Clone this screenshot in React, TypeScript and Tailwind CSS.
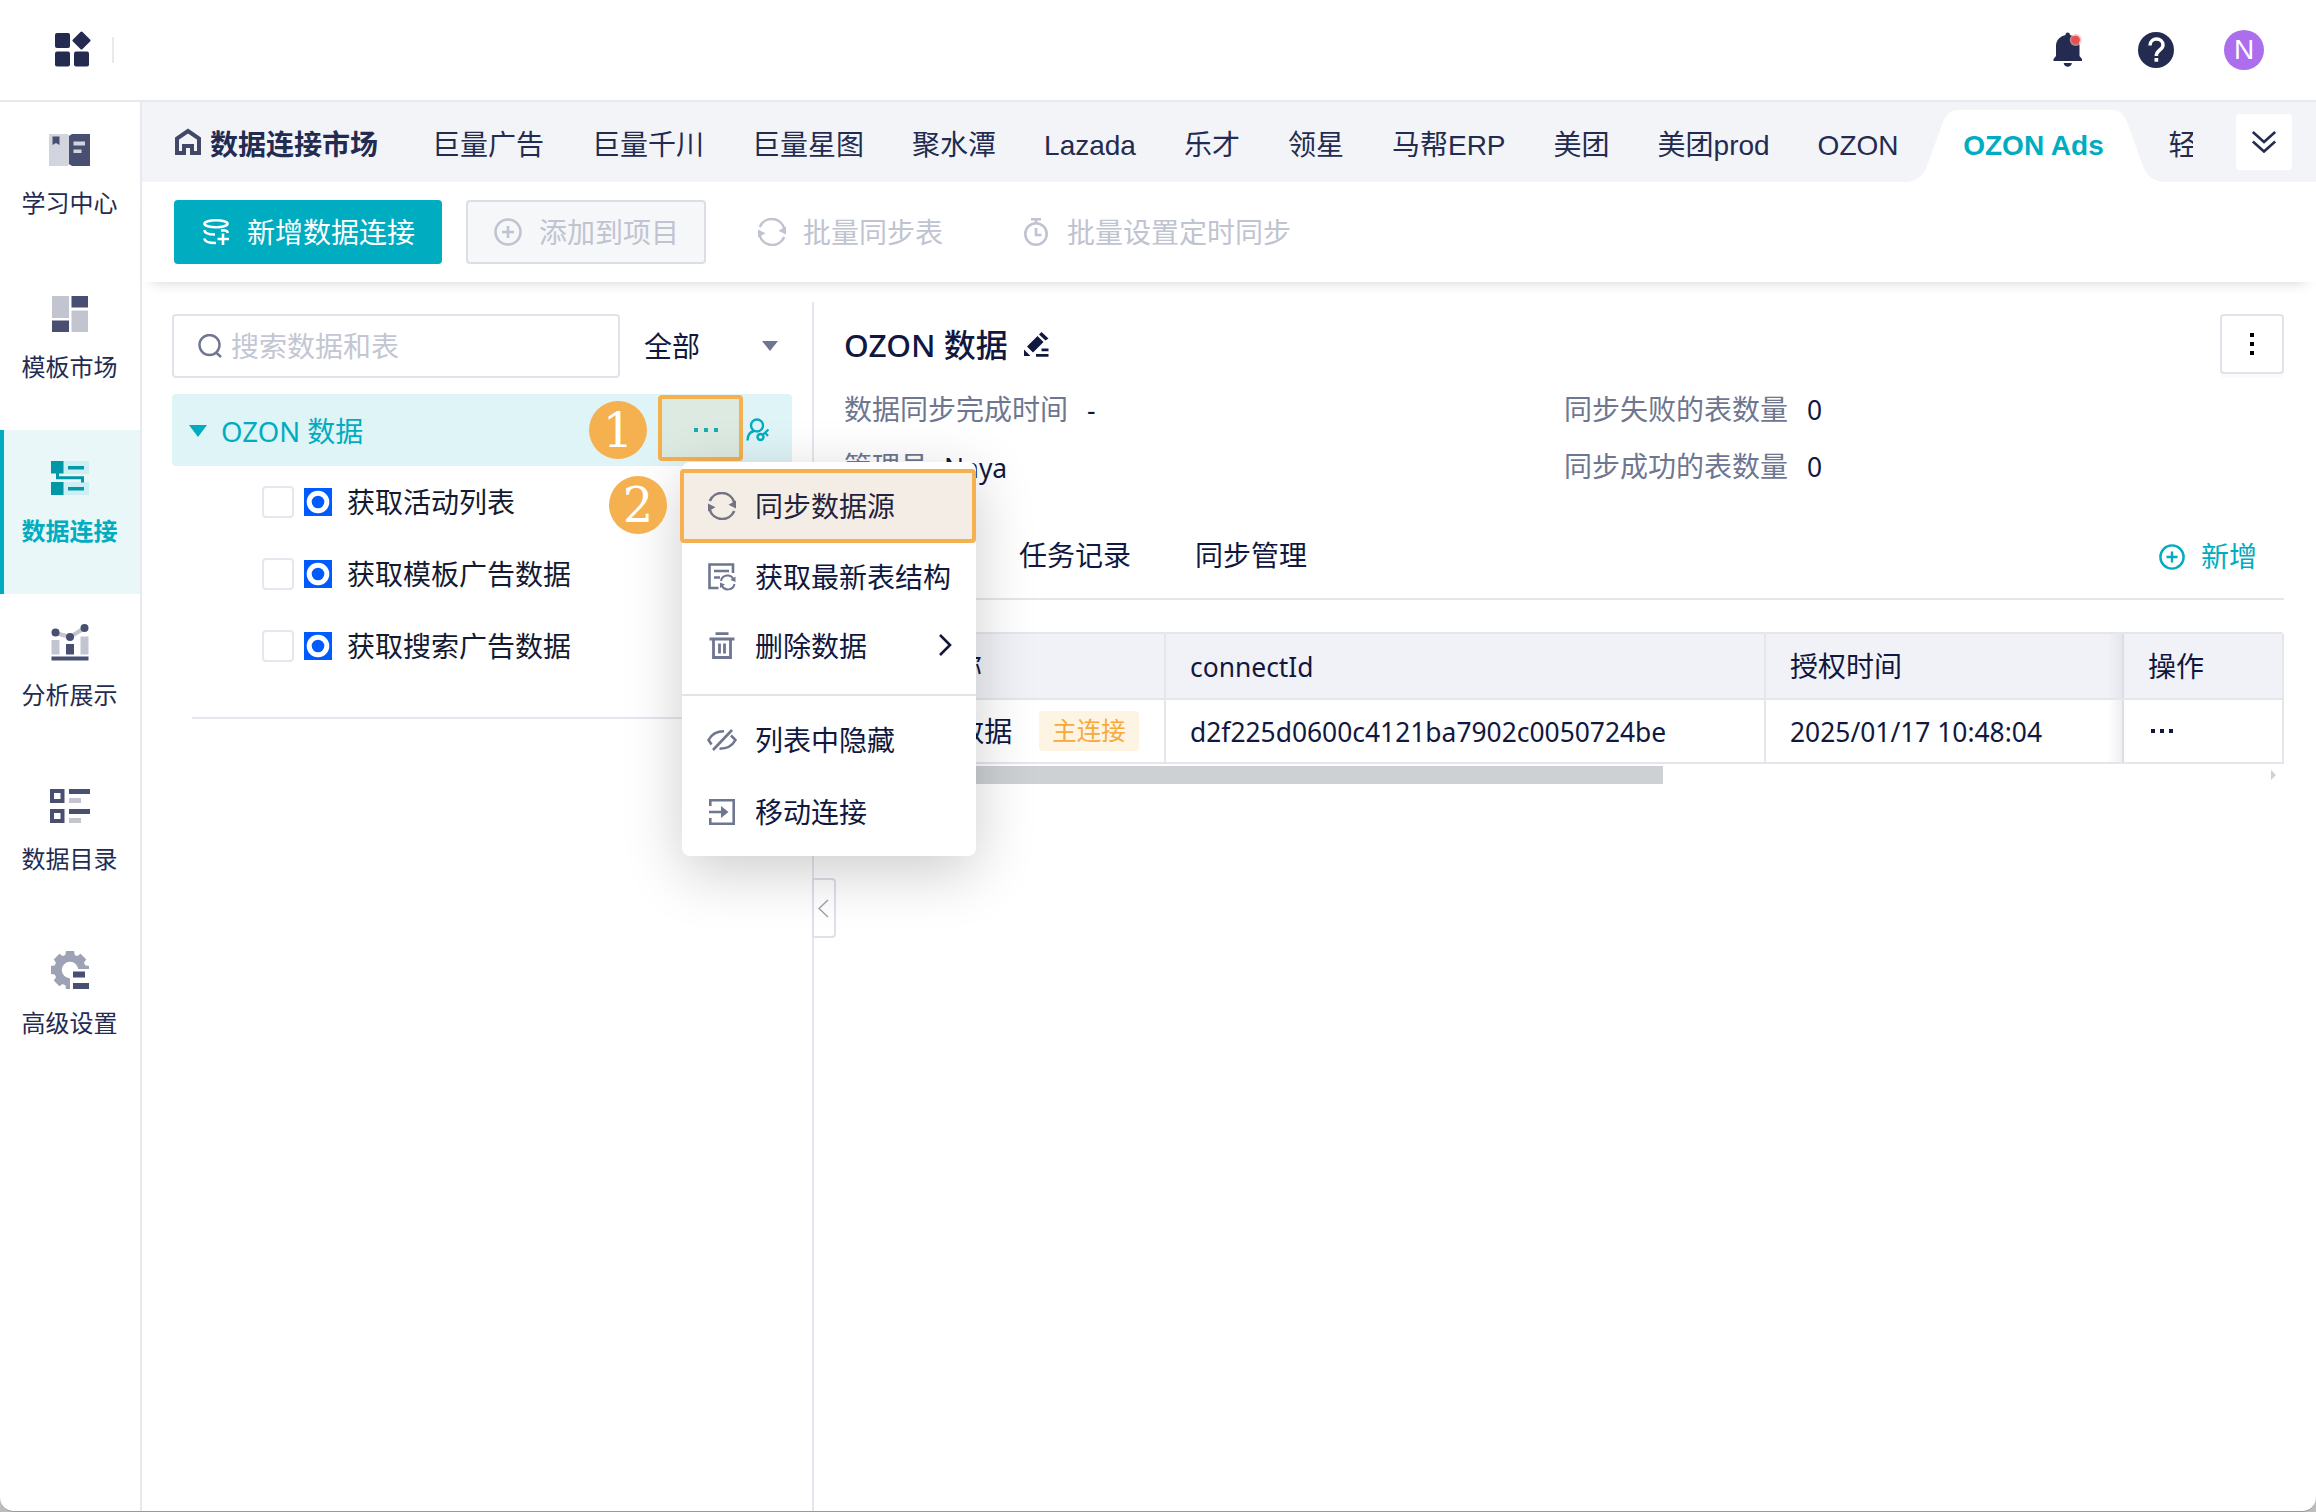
import type { ReactNode } from 'react';

const TABS = ['巨量广告', '巨量千川', '巨量星图', '聚水潭', 'Lazada', '乐才', '领星', '马帮ERP', '美团', '美团prod', 'OZON'];
const TABLES = ['获取活动列表', '获取模板广告数据', '获取搜索广告数据'];

// Latin text in the content area is set in a humanist face, slightly smaller than the CJK text
function Latin({ children, className = 'text-[26.4px]' }: { children: ReactNode; className?: string }) {
  return <span className={`font-['Noto_Sans','Noto_Sans_CJK_SC',sans-serif] ${className}`}>{children}</span>;
}

function BookIcon() {
  return (
    <svg width="42" height="32" viewBox="0 0 42 32">
      <path d="M0 0H18L21 2V30L18 32H0Z" fill="#d2d5de" />
      <path d="M20 2L23 0H41V32H23L20 30Z" fill="#484f70" />
      <path d="M3.5 2.5H10.5V11L7 9L3.5 11Z" fill="#484f70" />
      <path d="M24.5 7.5H36V11.5H24.5ZM24.5 15.5H32.5V19H24.5Z" fill="#d2d5de" />
    </svg>
  );
}

function TemplateIcon() {
  return (
    <svg width="36" height="36" viewBox="0 0 36 36">
      <path d="M0 0H17V22H0ZM19.5 14.5H36V36H19.5Z" fill="#c2c5d0" />
      <path d="M19.5 0H36V11.5H19.5ZM0 24.5H17V36H0Z" fill="#484f70" />
    </svg>
  );
}

function ConnectIcon() {
  return (
    <svg width="38" height="34" viewBox="0 0 38 34">
      <path d="M12 0H38V13H12ZM12 21H38V34H12Z" fill="#cdeef3" />
      <path d="M0 0H12.5V12.5H0ZM0 21H12.5V34H0Z" fill="#0097a7" />
      <path d="M17 5H33V8.5H17ZM17 26H33V29.5H17Z" fill="#0097a7" />
      <path d="M6.5 12V16.7H31.5V21.5" fill="none" stroke="#0097a7" strokeWidth="3" />
    </svg>
  );
}

function AnalysisIcon() {
  return (
    <svg width="38" height="38" viewBox="0 0 38 38">
      <path d="M4.5 10L19 14L33.5 5" fill="none" stroke="#c2c5d0" strokeWidth="4" />
      <path d="M0.5 17H8.5V31.5H0.5ZM29.5 13.5H37.5V31.5H29.5Z" fill="#c2c5d0" />
      <path d="M15 21H23V31.5H15ZM0.5 33.5H37.5V37.5H0.5Z" fill="#484f70" />
      <circle cx="4.5" cy="9.5" r="4" fill="#484f70" />
      <circle cx="19" cy="14" r="4" fill="#484f70" />
      <circle cx="33.5" cy="5" r="4" fill="#484f70" />
    </svg>
  );
}

function CatalogIcon() {
  return (
    <svg width="40" height="34" viewBox="0 0 40 34">
      <path d="M2 2H12.5V12H2ZM2 22H12.5V32H2Z" fill="none" stroke="#484f70" strokeWidth="4" />
      <path d="M19 0H40V5H19ZM19 20H40V25H19Z" fill="#484f70" />
      <path d="M19 9H31V14H19ZM19 29H31V34H19Z" fill="#c2c5d0" />
    </svg>
  );
}

function SettingIcon() {
  return (
    <svg width="38" height="38" viewBox="0 0 38 38">
      <g fill="#9ea2b5">
        <circle cx="19" cy="19" r="12" fill="none" stroke="#9ea2b5" strokeWidth="7.5" />
        {[90, 135, 180, 225, 270, 315, 0, 45].map((deg) => (
          <path key={deg} d="M15 0H23L24 6H14Z" transform={`rotate(${deg} 19 19)`} />
        ))}
      </g>
      <path d="M19 18H38V38H19Z" fill="#fff" />
      <path d="M22 20.5H34V26.5H22ZM22 32H38V38H22Z" fill="#484f70" />
    </svg>
  );
}

const MENU = [
  { label: '学习中心', icon: <BookIcon /> },
  { label: '模板市场', icon: <TemplateIcon /> },
  { label: '数据连接', icon: <ConnectIcon />, active: true },
  { label: '分析展示', icon: <AnalysisIcon /> },
  { label: '数据目录', icon: <CatalogIcon /> },
  { label: '高级设置', icon: <SettingIcon /> },
];

function SyncIcon({ size = 28 }: { size?: number }) {
  return (
    <svg width={size} height={size} viewBox="0 0 28 28" fill="none" stroke="currentColor" strokeWidth="2.6">
      <path d="M1.8 9A13 13 0 0 1 26.3 10.5" />
      <path d="M26.2 19A13 13 0 0 1 1.7 17.5" />
      <path d="M28 8.5V16.5L20.5 12.8Z M0 19.5V11.5L7.5 15.2Z" fill="currentColor" stroke="none" />
    </svg>
  );
}

function PlusCircle({ size = 28 }: { size?: number }) {
  return (
    <svg width={size} height={size} viewBox="0 0 28 28" fill="none" stroke="currentColor" strokeWidth="2.6">
      <circle cx="14" cy="14" r="12.5" />
      <path d="M14 8V20M8 14H20" />
    </svg>
  );
}

function Header() {
  return (
    <header className="flex h-[102px] shrink-0 items-center border-b-2 border-[#e8e9ee] pr-[52px] pl-[54px]">
      <svg width="38" height="38" viewBox="0 0 38 38" fill="#242b50">
        <rect x="1" y="2" width="15" height="15" rx="2" />
        <rect x="1" y="20.5" width="15" height="15" rx="2" />
        <rect x="20" y="20.5" width="15" height="15" rx="2" />
        <rect x="20.7" y="2.7" width="13.6" height="13.6" rx="1.5" transform="rotate(45 27.5 9.5)" />
      </svg>
      <div className="ml-5 h-[26px] w-0.5 bg-[#e8e9ee]" />
      <div className="flex-1" />
      <svg width="30" height="36" viewBox="0 0 30 36" className="mr-[55px]">
        <path d="M12.5 3C12.5 -0.3 17 -0.3 17 3C23 4.5 26.5 8.5 26.5 14V24L29 27V29H0.5V27L3 24V14C3 8.5 6.5 4.5 12.5 3Z" fill="#242b50" />
        <path d="M10.7 31H18.8C18.4 36 11.1 36 10.7 31Z" fill="#242b50" />
        <circle cx="22.7" cy="8" r="6" fill="#f6a9a9" fillOpacity="0.7" />
        <circle cx="22.7" cy="8" r="4.2" fill="#e8504f" />
      </svg>
      <svg width="36" height="36" viewBox="0 0 36 36" className="mr-[50px]">
        <circle cx="18" cy="18" r="18" fill="#242b50" />
        <path d="M12 13.5C12 5 25 5 25 13C25 18 18.3 18 18.3 24" fill="none" stroke="#fff" strokeWidth="3.5" />
        <path d="M16.5 26H20.2V29.7H16.5Z" fill="#fff" />
      </svg>
      <div className="flex size-10 items-center justify-center rounded-full bg-[#ad6eee] text-[28px] leading-none text-white">N</div>
    </header>
  );
}

function Sidebar() {
  return (
    <nav className="w-[142px] shrink-0 border-r-2 border-[#e8e9ee]">
      {MENU.map((item) => (
        <div
          key={item.label}
          className={
            item.active
              ? 'flex h-[164px] flex-col items-center border-l-4 border-[#00acc0] bg-[#e9f7f8] pr-1 font-bold text-[#00acc0]'
              : 'flex h-[164px] flex-col items-center text-[#242b50]'
          }
        >
          <div className="mt-7 flex h-10 items-center">{item.icon}</div>
          <div className="mt-4 mr-px text-[24px] leading-9">{item.label}</div>
        </div>
      ))}
    </nav>
  );
}

function TabBar() {
  return (
    <div className="flex h-20 shrink-0 items-center bg-[#f2f4f8] pl-[32px] text-[28px] leading-10 whitespace-nowrap text-[#242b50]">
      <svg width="28" height="28" viewBox="0 0 28 28" fill="none" stroke="#424968" strokeWidth="4">
        <path d="M3 25V10.5L14 3L25 10.5V25H18V18H10V25Z" />
      </svg>
      <div className="ml-2 w-[222px] pt-2 font-bold">数据连接市场</div>
      <div className="flex gap-12 pt-2">
        {TABS.map((tab) => (
          <div key={tab}>{tab}</div>
        ))}
      </div>
      <div className="relative ml-2 flex h-[72px] w-[256px] translate-y-1 items-center justify-center">
        <svg className="absolute inset-0" width="256" height="72" viewBox="0 0 256 72">
          <path d="M0 72C10 71 17 65 20 56L36 12C39 4 44 0 52 0H204C212 0 217 4 220 12L236 56C239 65 246 71 256 72Z" fill="#fff" />
        </svg>
        <span className="relative pr-0.5 font-bold text-[#00acc0]">OZON Ads</span>
      </div>
      <div className="ml-[6px] w-6 overflow-hidden pt-2">轻</div>
      <div className="mr-6 ml-auto flex size-14 items-center justify-center rounded bg-white">
        <svg width="24" height="22" viewBox="0 0 24 22" fill="none" stroke="#242b50" strokeWidth="2.6">
          <path d="M0.8 1L12 11L23.2 1M0.8 10.5L12 20.5L23.2 10.5" />
        </svg>
      </div>
    </div>
  );
}

function Toolbar() {
  return (
    <div className="flex h-[100px] shrink-0 items-center pl-8 text-[28px] leading-10 text-[#c0c3d0] shadow-[0_10px_12px_-10px_rgba(0,0,0,0.18)]">
      <button className="flex h-16 w-[268px] items-center rounded bg-[#00acc0] pl-[29px] text-white">
        <svg width="26" height="26" viewBox="0 0 26 26" fill="none" stroke="currentColor" strokeWidth="2.6">
          <ellipse cx="13" cy="4.8" rx="11.5" ry="3.5" />
          <path d="M1.5 11C1.5 14 6 15.5 12 15.5M1.5 19.5C1.5 22.5 6 24 13 24M18 11.5C22 11 24.5 11.5 24.8 14M20 14.5V26M14.5 20H26" />
        </svg>
        <span className="ml-[18px] pt-1">新增数据连接</span>
      </button>
      <button className="ml-6 flex h-16 w-[240px] items-center rounded border-2 border-[#dcdee6] bg-[#f6f7f9] pl-[26px]">
        <PlusCircle />
        <span className="ml-[17px] pt-1">添加到项目</span>
      </button>
      <div className="ml-[52px] flex items-center">
        <SyncIcon />
        <span className="ml-[17px] pt-1">批量同步表</span>
      </div>
      <div className="ml-[79px] flex items-center">
        <svg width="28" height="28" viewBox="0 0 28 28" fill="none" stroke="currentColor" strokeWidth="2.6">
          <circle cx="14" cy="16" r="10.7" />
          <path d="M9 1.3H19M14 1V5M14 10V17H19.5" />
        </svg>
        <span className="ml-[17px] pt-1">批量设置定时同步</span>
      </div>
    </div>
  );
}

function MenuRow({ icon, label, className = 'h-[72px]', arrow }: { icon: ReactNode; label: string; className?: string; arrow?: boolean }) {
  return (
    <div className={`flex items-center pr-6 pl-6 whitespace-nowrap ${className}`}>
      <div className="flex w-8 justify-center pb-0.5 text-[#6e7690]">{icon}</div>
      <span className="ml-[17px] flex-1 pt-0.5">{label}</span>
      {arrow && (
        <svg width="13" height="22" viewBox="0 0 13 22" fill="none" stroke="#111840" strokeWidth="2.6" className="mb-1">
          <path d="M1 1L11 11L1 21" />
        </svg>
      )}
    </div>
  );
}

function ContextMenu() {
  return (
    <div className="absolute top-[68px] left-[510px] z-10 h-[394px] w-[294px] rounded-lg bg-white pt-2 text-[#111840] shadow-[0_16px_60px_rgba(0,0,0,0.2)]">
      <MenuRow icon={<SyncIcon />} label="同步数据源" className="h-[72px] pt-0.5" />
      <MenuRow
        label="获取最新表结构"
        icon={
          <svg width="28" height="28" viewBox="0 0 28 28" fill="none" stroke="currentColor" strokeWidth="2.6">
            <path d="M10.5 25H1.5V1.5H25V10M6 8H21M6 14.5H12" />
            <path d="M13 18C14 11.5 23 10.5 25.5 16.5M26.5 21C25 28 16 28 13.5 22" strokeWidth="2" />
            <path d="M27.5 13.5V19L22.5 17ZM12 25V19.5L17 21.5Z" fill="currentColor" stroke="none" />
          </svg>
        }
      />
      <MenuRow
        label="删除数据"
        arrow
        className="h-[68px] pb-0.5"
        icon={
          <svg width="26" height="28" viewBox="0 0 26 28" fill="none" stroke="currentColor" strokeWidth="2.8">
            <path d="M6.5 1.7H19.5M0.5 7H25.5M4.5 7V25.5H21.5V7M10.5 11.5V21.5M15.5 11.5V21.5" />
          </svg>
        }
      />
      <div className="mt-3 mb-2.5 h-0.5 bg-[#e3e4ea]" />
      <MenuRow
        label="列表中隐藏"
        className="h-[72px] pb-0.5"
        icon={
          <svg width="30" height="22" viewBox="0 0 30 22" fill="none" stroke="currentColor" strokeWidth="2.6">
            <path d="M17 2.3C10 2.3 4.5 5.5 1.5 11L4.5 15.5M24 6.5L28.5 11C25.5 16.5 20 19.7 12.5 19.7M6 21L25 1" />
          </svg>
        }
      />
      <MenuRow
        label="移动连接"
        className="h-[72px] pb-0.5"
        icon={
          <svg width="26" height="26" viewBox="0 0 26 26" fill="none" stroke="currentColor" strokeWidth="2.6">
            <path d="M1.3 7V1.3H24.7V24.7H1.3V19M0 13H13" />
            <path d="M12 7L19.5 13L12 19Z" fill="currentColor" stroke="none" />
          </svg>
        }
      />
      <div className="absolute top-[7px] -left-0.5 h-[74px] w-[296px] rounded border-4 border-[#f5b04f] bg-[#a06a28]/12" />
    </div>
  );
}

function Badge({ n, className }: { n: number; className: string }) {
  return (
    <div
      className={`absolute flex size-[58px] items-center justify-center rounded-full bg-[#f5b04f] font-['DejaVu_Serif',serif] text-[48px] leading-none text-white ${className}`}
    >
      {n}
    </div>
  );
}

function DataTree() {
  return (
    <aside className="w-[670px] shrink-0 pt-3 pl-[30px] text-[28px] leading-10 text-[#111840]">
      <div className="flex h-16">
        <div className="flex w-[448px] items-center rounded border-2 border-[#e2e3ea] pl-6">
          <svg width="24" height="24" viewBox="0 0 24 24" fill="none" stroke="#6e7690" strokeWidth="2.4">
            <circle cx="11.5" cy="11" r="10" />
            <path d="M17.5 18L23 23" />
          </svg>
          <span className="ml-[9px] pt-1 text-[#c3c6d3]">搜索数据和表</span>
        </div>
        <div className="flex flex-1 items-center pl-6">
          <span className="pt-1">全部</span>
          <svg className="ml-[62px]" width="16" height="10" viewBox="0 0 16 10">
            <path d="M0 0H16L8 10Z" fill="#6e7690" />
          </svg>
        </div>
      </div>

      <div className="relative mt-4 flex h-[72px] w-[620px] items-center rounded bg-[#dff4f7] pl-[17px] text-[#00acc0]">
        <svg width="18" height="12" viewBox="0 0 18 12" className="mt-0.5">
          <path d="M0 0H18L9 12Z" fill="currentColor" />
        </svg>
        <span className="ml-[14px] pt-1">
          <Latin className="text-[27.5px]">OZON </Latin>数据
        </span>
        <svg className="ml-auto" width="24" height="4" viewBox="0 0 24 4" fill="currentColor">
          <path d="M0 0H4V4H0ZM10 0H14V4H10ZM20 0H24V4H20Z" />
        </svg>
        <svg className="mr-[22px] ml-7" width="24" height="24" viewBox="0 0 24 24" fill="none" stroke="currentColor" strokeWidth="2.4">
          <circle cx="11" cy="7.5" r="6" />
          <path d="M1.5 22.5C1.5 17.5 4 14 8 13" />
          <circle cx="14.5" cy="19" r="3" />
          <path d="M16.5 17L22.5 11.5M19 14.5L22 18" strokeWidth="2.2" />
        </svg>
        <div className="absolute top-px left-[486px] h-[66px] w-[85px] rounded border-4 border-[#f5b04f] bg-[#d7a540]/12" />
        <ContextMenu />
        <Badge n={1} className="top-[7px] left-[417px]" />
        <Badge n={2} className="top-[82px] left-[437px] z-20" />
      </div>

      {TABLES.map((name) => (
        <div key={name} className="flex h-[72px] items-center pl-[90px] text-[#141a30]">
          <div className="size-8 rounded border-2 border-[#e6e7ee]" />
          <svg className="ml-2.5" width="28" height="28" viewBox="0 0 28 28">
            <rect width="28" height="28" fill="#005bff" />
            <circle cx="14" cy="14" r="8.8" fill="none" stroke="#fff" strokeWidth="5" />
          </svg>
          <span className="ml-[15px] pt-1">{name}</span>
        </div>
      ))}
      <div className="mt-[35px] ml-5 h-0.5 w-[600px] bg-[#e6e7ee]" />
    </aside>
  );
}

function Info({ label, value }: { label: string; value: string }) {
  return (
    <div className="flex h-[57px] items-center">
      <span className="pt-px text-[#6e7690]">{label}</span>
      <Latin className={label === '管理员' ? 'ml-4 text-[26.4px]' : 'ml-[19px] pb-0.5 text-[26.4px]'}>{value}</Latin>
    </div>
  );
}

function ConnectionTable() {
  return (
    <div className="mt-8">
      <div className="rounded-t border-2 border-[#e5e6ec]">
        <div className="flex h-[66px] items-center border-b-2 border-[#e5e6ec] bg-[#f1f2f7]">
          <div className="flex h-full w-80 items-center border-r-2 border-[#e5e6ec] pt-1 pl-6">连接名称</div>
          <div className="flex h-full w-[600px] items-center border-r-2 border-[#e5e6ec] pt-0.5 pl-6">
            <Latin>connectId</Latin>
          </div>
          <div className="flex h-full w-[358px] items-center border-r-2 border-[#dcdee5] bg-linear-to-l from-[#e6e7ed] to-[#f1f2f7] to-4% pt-1 pl-6">授权时间</div>
          <div className="pt-1 pl-6">操作</div>
        </div>
        <div className="flex h-[62px] items-center">
          <div className="flex h-full w-80 items-center border-r-2 border-[#e5e6ec] pl-6">
            <span className="pt-0.5">
              <Latin className="text-[27.5px]">OZON </Latin>数据
            </span>
            <span className="ml-[27px] rounded bg-[#fef4e4] px-[13px] pt-0.5 text-[24.5px] leading-[38px] text-[#f7a93b]">主连接</span>
          </div>
          <div className="flex h-full w-[600px] items-center border-r-2 border-[#e5e6ec] pt-0.5 pl-6">
            <Latin>d2f225d0600c4121ba7902c0050724be</Latin>
          </div>
          <div className="flex h-full w-[358px] items-center border-r-2 border-[#dcdee5] bg-linear-to-l from-[#efeff3] to-white to-4% pt-0.5 pl-6">
            <Latin>2025/01/17 10:48:04</Latin>
          </div>
          <svg className="ml-[27px]" width="22" height="4" viewBox="0 0 22 4" fill="#111840">
            <path d="M0 0H4V4H0ZM9 0H13V4H9ZM18 0H22V4H18Z" />
          </svg>
        </div>
      </div>
      <div className="mt-0.5 flex items-center justify-between pr-2 pl-5">
        <div className="h-[18px] w-[799px] bg-[#cdd1d4]" />
        <svg width="5" height="10" viewBox="0 0 5 10">
          <path d="M0 0L5 5L0 10Z" fill="#cdd1d4" />
        </svg>
      </div>
    </div>
  );
}

function Detail() {
  return (
    <section className="relative flex-1 border-l-2 border-[#e6e7ee] pt-3 pr-8 pl-[30px] text-[28px] leading-10 text-[#111840]">
      <div className="flex h-[60px] items-center">
        <h1 className="pt-0.5 text-[32px] font-medium">
          <Latin className="text-[31.6px]">OZON </Latin>数据
        </h1>
        <svg className="ml-4" width="25" height="25" viewBox="0 0 25 25" fill="#111840">
          <path d="M3 14.5L13.5 4L19.5 10L9 20.5ZM15 2.5L17.5 0L24.5 6.5L21.5 8.5ZM0 17.5L6.5 24H0ZM17.5 16.5H24.5V19.2H17.5ZM12 22H24.5V24.7H12Z" />
        </svg>
        <button className="ml-auto flex h-[60px] w-16 items-center justify-center rounded border-2 border-[#e2e3ea] shadow-[0_4px_0_rgba(0,0,0,0.015)]">
          <svg width="4" height="22" viewBox="0 0 4 22">
            <path d="M0 0H4V4H0ZM0 9H4V13H0ZM0 18H4V22H0Z" />
          </svg>
        </button>
      </div>
      <div className="mt-2 grid grid-cols-2">
        <Info label="数据同步完成时间" value="-" />
        <Info label="同步失败的表数量" value="0" />
        <Info label="管理员" value="Naya" />
        <Info label="同步成功的表数量" value="0" />
      </div>
      <div className="mt-[18px] flex h-[86px] items-center gap-16 border-b-2 border-[#e5e6ec] pt-0.5 pl-[175px]">
        <span>任务记录</span>
        <span>同步管理</span>
        <button className="mr-[27px] ml-auto flex items-center text-[#00acc0]">
          <PlusCircle size={26} />
          <span className="ml-4 pt-0.5">新增</span>
        </button>
      </div>
      <ConnectionTable />
      <div className="absolute top-[576px] -left-0.5 flex h-[60px] w-[24px] items-center rounded-r border-2 border-[#dfe0e8] pl-1">
        <svg width="11" height="19" viewBox="0 0 11 19" fill="none" stroke="#9ea2b5" strokeWidth="1.5">
          <path d="M10 1L1 9.5L10 18" />
        </svg>
      </div>
    </section>
  );
}

export default function App() {
  return (
    <div className="h-[1512px] w-[2316px] overflow-hidden bg-[#bdbdbd] font-['Liberation_Sans','Noto_Sans_CJK_SC',sans-serif]">
      <div className="flex h-[1512px] flex-col rounded-b-[14px] border-b border-[#999] bg-white">
        <Header />
        <div className="flex min-h-0 flex-1">
          <Sidebar />
          <main className="flex min-w-0 flex-1 flex-col">
            <TabBar />
            <Toolbar />
            <div className="mt-5 flex min-h-0 flex-1">
              <DataTree />
              <Detail />
            </div>
          </main>
        </div>
      </div>
    </div>
  );
}
